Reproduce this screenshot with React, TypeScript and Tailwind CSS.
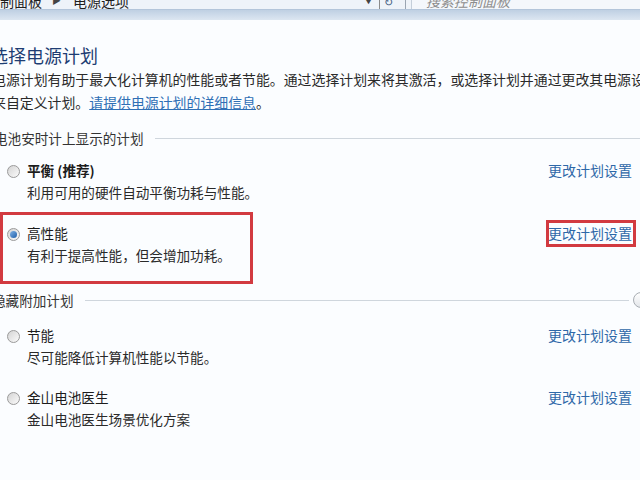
import React from 'react';

const font = { fontFamily: '"Noto Sans CJK SC", "Noto Sans", sans-serif' };

interface Plan {
  name: string;
  desc: string;
  bold?: boolean;
  checked?: boolean;
}

function Radio({ checked }: { checked?: boolean }) {
  return (
    <span className="mt-[2px] flex h-[13px] w-[13px] shrink-0 items-center justify-center rounded-full border border-[#9a9a9a] bg-gradient-to-br from-[#d4d4d4] to-[#fbfbfb]">
      {checked && (
        <span className="h-[7px] w-[7px] rounded-full bg-gradient-to-br from-[#7fb2e5] to-[#1d5ea8]" />
      )}
    </span>
  );
}

function PlanText({ plan }: { plan: Plan }) {
  return (
    <div className="flex gap-[7px]">
      <div className="flex h-[22px] items-center">
        <Radio checked={plan.checked} />
      </div>
      <div>
        <div className={`leading-[22px] text-[#1c1c1c] ${plan.bold ? 'font-bold' : ''}`}>{plan.name}</div>
        <div className="leading-[22px] text-[#2a2a2a]">{plan.desc}</div>
      </div>
    </div>
  );
}

function ChangeLink({ marked }: { marked?: boolean }) {
  return (
    <span className="relative w-[84px] text-[14px] leading-[22px] text-[#2e68a8]">
      更改计划设置
      {marked && (
        <span className="absolute -left-[2px] -right-[4px] -top-[3px] -bottom-[4px] border-[3px] border-[#d23a40]" />
      )}
    </span>
  );
}

function SectionHeader({ title, shift, button }: { title: string; shift: string; button?: boolean }) {
  return (
    <div className="flex items-center leading-[20px]">
      <span className={`${shift} shrink-0 whitespace-nowrap text-[#333]`}>{title}</span>
      <span className="ml-[11px] h-px flex-1 bg-[#cfd6dd]" />
      {button && (
        <span className="-mr-[9px] ml-[4px] h-[16px] w-[16px] shrink-0 rounded-full border border-[#a8adb3] bg-gradient-to-b from-[#ffffff] to-[#e3e6ea]" />
      )}
    </div>
  );
}

export default function App() {
  const plans: Plan[] = [
    { name: '平衡 (推荐)', desc: '利用可用的硬件自动平衡功耗与性能。', bold: true },
    { name: '高性能', desc: '有利于提高性能，但会增加功耗。', checked: true },
    { name: '节能', desc: '尽可能降低计算机性能以节能。' },
    { name: '金山电池医生', desc: '金山电池医生场景优化方案' },
  ];

  return (
    <div className="h-[480px] w-[640px] overflow-hidden bg-[#fbfdff] text-[13.6px]" style={font}>
      {/* 地址栏 */}
      <div className="flex h-[9px] overflow-hidden bg-[#eef3f9]">
        <div className="-mt-[7px] flex h-[16px] w-full items-center text-[14px] leading-[16px]">
          <span className="-ml-[14px] whitespace-nowrap text-[#1e1e1e]">控制面板</span>
          <span className="ml-[10px] text-[9px] text-[#444]">▶</span>
          <span className="ml-[12px] whitespace-nowrap text-[#1e1e1e]">电源选项</span>
          <span className="ml-[235px] text-[9px] text-[#444]">▼</span>
          <span className="ml-[6px] h-full w-px bg-[#8b8b8b]" />
          <span className="ml-[4px] text-[11px] text-[#3a5a80]">↻</span>
          <span className="ml-[12px] h-full w-px bg-[#9aa5b2]" />
          <div className="ml-[5px] flex h-full flex-1 items-center border-l border-[#c5cfda] bg-[#f4f7fb]">
            <span className="ml-[14px] whitespace-nowrap italic text-[#8d8d8d]">搜索控制面板</span>
          </div>
        </div>
      </div>
      <div className="h-[11px] border-t border-[#b3c5da] bg-gradient-to-b from-[#bfd0e3] to-[#dce6f1]" />

      <main>
        <h1 className="-ml-[10px] mt-[23px] whitespace-nowrap text-[18px] leading-[24px] text-[#1e3d73]">选择电源计划</h1>

        <div className="-ml-[8px] mt-[1px] whitespace-nowrap text-[13.9px] leading-[23px] text-[#2a2a2a]">
          <div>电源计划有助于最大化计算机的性能或者节能。通过选择计划来将其激活，或选择计划并通过更改其电源设置</div>
          <div>
            来自定义计划。<span className="text-[#2f6fb5] underline">请提供电源计划的详细信息</span>。
          </div>
        </div>

        <div className="mt-[14px]">
          <SectionHeader title="电池安时计上显示的计划" shift="-ml-[6px]" />
        </div>

        <div className="mt-[11px] flex items-start justify-between pr-[8px]">
          <div className="pl-[7px]">
            <PlanText plan={plans[0]} />
          </div>
          <ChangeLink />
        </div>

        <div className="mt-[9px] flex items-start justify-between pr-[8px]">
          <div className="w-[253px] border-[3px] border-[#d23a40] pb-[15px] pl-[4px] pt-[7px]">
            <PlanText plan={plans[1]} />
          </div>
          <div className="pt-[10px]">
            <ChangeLink marked />
          </div>
        </div>

        <div className="mt-[6px]">
          <SectionHeader title="隐藏附加计划" shift="-ml-[8px]" button />
        </div>

        <div className="mt-[14px] flex items-start justify-between pr-[8px]">
          <div className="pl-[7px]">
            <PlanText plan={plans[2]} />
          </div>
          <ChangeLink />
        </div>

        <div className="mt-[18px] flex items-start justify-between pr-[8px]">
          <div className="pl-[7px]">
            <PlanText plan={plans[3]} />
          </div>
          <ChangeLink />
        </div>
      </main>
    </div>
  );
}
